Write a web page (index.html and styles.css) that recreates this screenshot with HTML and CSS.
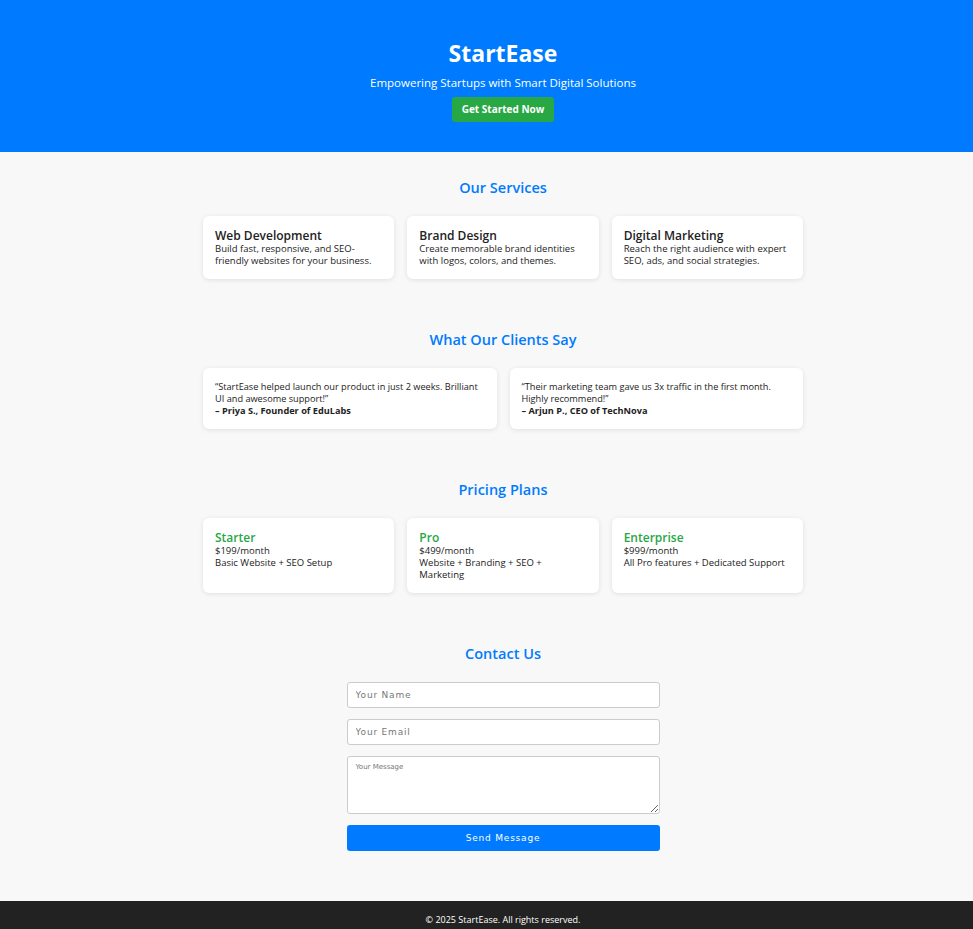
FILE: index.html
```html
<!DOCTYPE html>
<html lang="en">
<head>
<meta charset="utf-8">
<title>StartEase</title>
<link rel="stylesheet" href="styles.css">
</head>
<body>
<header class="hero">
  <h1 class="hero-title">StartEase</h1>
  <p class="hero-sub">Empowering Startups with Smart Digital Solutions</p>
  <a class="btn-green" href="#contact">Get Started Now</a>
</header>

<section class="section">
  <h2 class="section-title">Our Services</h2>
  <div class="grid-3">
    <div class="card">
      <h3 class="card-title">Web Development</h3>
      <p class="card-text">Build fast, responsive, and SEO-friendly websites for your business.</p>
    </div>
    <div class="card">
      <h3 class="card-title">Brand Design</h3>
      <p class="card-text">Create memorable brand identities with logos, colors, and themes.</p>
    </div>
    <div class="card">
      <h3 class="card-title">Digital Marketing</h3>
      <p class="card-text">Reach the right audience with expert SEO, ads, and social strategies.</p>
    </div>
  </div>
</section>

<section class="section">
  <h2 class="section-title">What Our Clients Say</h2>
  <div class="grid-2">
    <div class="card">
      <p class="card-text quote">“StartEase helped launch our product in just 2 weeks. Brilliant UI and awesome support!”</p>
      <p class="card-text quote strong">– Priya S., Founder of EduLabs</p>
    </div>
    <div class="card">
      <p class="card-text quote">“Their marketing team gave us 3x traffic in the first month. Highly recommend!”</p>
      <p class="card-text quote strong">– Arjun P., CEO of TechNova</p>
    </div>
  </div>
</section>

<section class="section">
  <h2 class="section-title">Pricing Plans</h2>
  <div class="grid-3">
    <div class="card">
      <h3 class="card-title plan">Starter</h3>
      <p class="card-text">$199/month</p>
      <p class="card-text">Basic Website + SEO Setup</p>
    </div>
    <div class="card">
      <h3 class="card-title plan">Pro</h3>
      <p class="card-text">$499/month</p>
      <p class="card-text">Website + Branding + SEO + Marketing</p>
    </div>
    <div class="card">
      <h3 class="card-title plan">Enterprise</h3>
      <p class="card-text">$999/month</p>
      <p class="card-text">All Pro features + Dedicated Support</p>
    </div>
  </div>
</section>

<section class="section section-contact" id="contact">
  <h2 class="section-title">Contact Us</h2>
  <form class="form">
    <input class="field" type="text" placeholder="Your Name">
    <input class="field" type="email" placeholder="Your Email">
    <textarea class="field area" placeholder="Your Message"></textarea>
    <button class="btn-blue" type="button">Send Message</button>
  </form>
</section>

<footer class="footer">© 2025 StartEase. All rights reserved.</footer>
</body>
</html>
```
FILE: styles.css
```css
* { box-sizing: border-box; }
html { overflow-x: hidden; }
body {
  margin: 0;
  width: 1006px;
  background: #f8f8f8;
  font-family: "Open Sans", "Noto Sans", sans-serif;
  color: #222;
}
.hero {
  background: #007bff;
  color: #fff;
  text-align: center;
  height: 152px;
  padding-top: 37px;
}
.hero-title {
  margin: 0;
  font-size: 23px;
  line-height: 32px;
  font-weight: 700;
}
.hero-sub {
  margin: 6px 0 5px;
  font-size: 11.5px;
  line-height: 16px;
  font-weight: 400;
}
.btn-green {
  display: inline-block;
  background: #28a745;
  color: #fff;
  font-size: 10px;
  font-weight: 700;
  text-decoration: none;
  width: 102px;
  height: 25px;
  line-height: 25px;
  border-radius: 3px;
}
.section {
  width: 600px;
  margin: 0 auto;
  padding: 26px 0 25px;
}
.section-title {
  margin: 0 0 18px;
  text-align: center;
  color: #007bff;
  font-size: 14.5px;
  line-height: 20px;
  font-weight: 600;
}
.grid-3 {
  display: grid;
  grid-template-columns: 1fr 1fr 1fr;
  gap: 13px;
}
.grid-2 {
  display: grid;
  grid-template-columns: 1fr 1fr;
  gap: 13px;
}
.card {
  background: #fff;
  border-radius: 6px;
  padding: 13px 12px 12px;
  box-shadow: 0 1px 5px rgba(0,0,0,0.1);
}
.card-title {
  margin: 0;
  font-size: 12px;
  line-height: 14px;
  font-weight: 600;
  color: #222;
}
.card-title.plan { color: #28a745; }
.card-text {
  margin: 0;
  font-size: 9.5px;
  line-height: 12px;
  color: #222;
}
.card-text.quote { font-size: 9.2px; }
.card-text.strong { font-weight: 700; }
.section-contact { padding-bottom: 50px; }
.form {
  width: 313px;
  margin: 0 auto;
  display: flex;
  flex-direction: column;
  gap: 11px;
}
.field {
  display: block;
  width: 100%;
  height: 26px;
  border: 1px solid #ccc;
  border-radius: 3px;
  background: #fff;
  padding: 0 8px;
  font-family: "DejaVu Sans", sans-serif;
  font-size: 9px;
  letter-spacing: 0.8px;
  color: #333;
}
.field::placeholder { color: #777; }
.area {
  height: 58px;
  padding: 6px 8px;
  font-size: 7px;
  letter-spacing: 0;
  resize: vertical;
}
.btn-blue {
  display: block;
  width: 100%;
  height: 26px;
  border: none;
  border-radius: 3px;
  background: #007bff;
  color: #fff;
  font-family: "DejaVu Sans", sans-serif;
  font-size: 9px;
  letter-spacing: 0.8px;
}
.footer {
  background: #222;
  color: #fff;
  text-align: center;
  font-size: 9px;
  padding: 13px 0 10px;
  line-height: 12px;
}
```
